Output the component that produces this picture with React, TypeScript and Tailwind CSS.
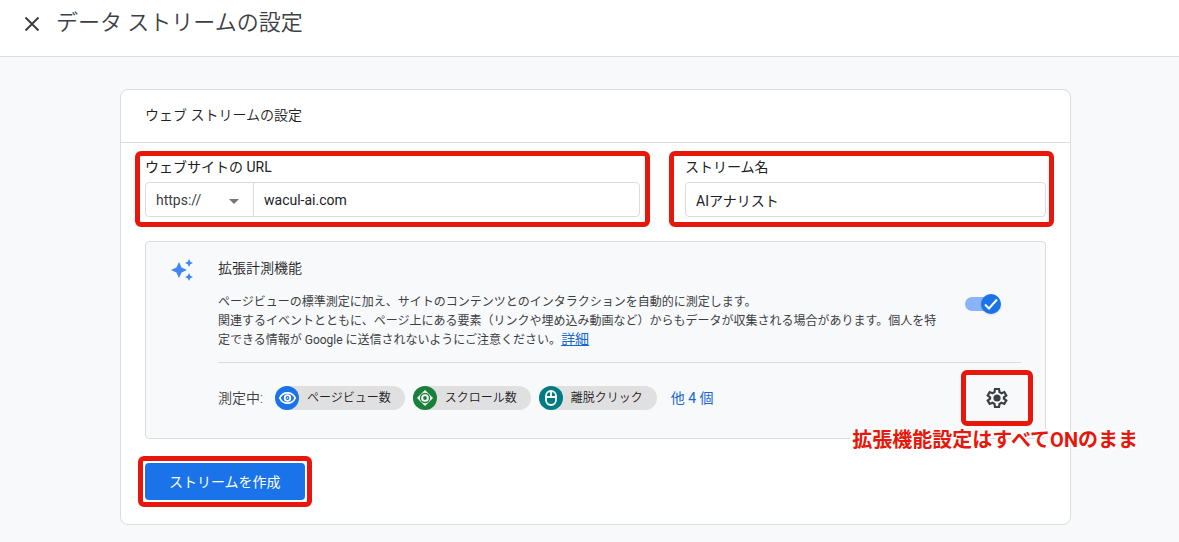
import { useState, type ReactNode } from 'react'
import clsx from 'clsx'

const STREAM_FONT = "font-['Roboto','Noto_Sans_CJK_JP',sans-serif]"

function Highlight({ className }: { className: string }) {
  return (
    <span
      aria-hidden="true"
      className={clsx('pointer-events-none absolute rounded-md border-5 border-[#e8170b]', className)}
    />
  )
}

function EyeIcon() {
  return (
    <svg viewBox="0 0 24 24" className="size-6">
      <path
        d="M4.800 12c1.400-3.200 4.200-5.200 7.700-5.200s6.300 2 7.700 5.200c-1.400 3.200-4.200 5.200-7.700 5.200S6.200 15.200 4.800 12z"
        fill="none"
        stroke="#fff"
        strokeWidth="1.800"
      />
      <circle cx="12.500" cy="12" r="2.800" fill="none" stroke="#fff" strokeWidth="1.800" />
      <circle cx="12.500" cy="12" r="0.800" fill="#fff" />
    </svg>
  )
}

function ScrollIcon() {
  return (
    <svg viewBox="0 0 24 24" className="size-6">
      <path d="M12 4l8 8-8 8-8-8z" fill="#fff" />
      <circle cx="12" cy="12" r="4.500" fill="none" stroke="#188038" strokeWidth="1.300" />
      <circle cx="12" cy="12" r="1.900" fill="#188038" />
    </svg>
  )
}

function MouseIcon() {
  return (
    <svg viewBox="0 0 24 24" className="size-6" fill="none" stroke="#fff" strokeWidth="1.800">
      <rect x="7" y="5" width="10" height="14" rx="5" />
      <path d="M7 11h10M12 5v6" />
    </svg>
  )
}

type ChipProps = {
  label: string
  color: string
  icon: ReactNode
}

const METRICS: ChipProps[] = [
  { label: 'ページビュー数', color: 'bg-[#1a73e8]', icon: <EyeIcon /> },
  { label: 'スクロール数', color: 'bg-[#188038]', icon: <ScrollIcon /> },
  { label: '離脱クリック', color: 'bg-[#007b83]', icon: <MouseIcon /> },
]

function MetricChip({ label, color, icon }: ChipProps) {
  return (
    <li className="flex h-6 items-center gap-2 rounded-full bg-[#e0e0e0] pr-3.5 text-xs text-[#202124]">
      <span className={clsx('size-6 rounded-full', color)}>{icon}</span>
      {label}
    </li>
  )
}

function MeasurementSwitch() {
  const [enabled, setEnabled] = useState(true)

  return (
    <label className="relative flex h-5 w-9 cursor-pointer items-center">
      <input
        type="checkbox"
        role="switch"
        aria-label="拡張計測機能"
        checked={enabled}
        onChange={(e) => setEnabled(e.target.checked)}
        className="peer sr-only"
      />
      <span className="h-3.5 w-8 rounded-full bg-gray-300 peer-checked:bg-[#8ab4f8]" />
      <span className="absolute left-0 flex size-5 items-center justify-center rounded-full bg-gray-500 shadow peer-checked:left-4 peer-checked:bg-[#1a73e8]">
        <svg viewBox="0 0 20 20" className="size-5" fill="none" stroke="#fff" strokeWidth="2">
          <path d="M4 10.500l4 4 8-9" />
        </svg>
      </span>
    </label>
  )
}

export default function App() {
  const [protocol, setProtocol] = useState('https://')
  const [url, setUrl] = useState('wacul-ai.com')
  const [name, setName] = useState('AIアナリスト')

  return (
    <div className={clsx('min-h-screen bg-[#f8f9fb] text-sm text-[#202124]', STREAM_FONT)}>
      {/* Header */}
      <header className="flex h-[57px] items-start gap-4 border-b border-[#dadce0] bg-white pt-2 pl-6">
        <button type="button" aria-label="閉じる" className="mt-2 size-4">
          <svg viewBox="0 0 16 16" className="size-4" fill="none" stroke="#3c4043" strokeWidth="2">
            <path d="M1.500 1.500l13 13M14.500 1.500l-13 13" />
          </svg>
        </button>
        <h1 className="text-[22px] leading-[30px] font-[350] text-[#3c4043]">データ ストリームの設定</h1>
      </header>

      <main className="pt-8 pr-[108px] pb-4 pl-[120px]">
        <section className="rounded-lg border border-[#dadce0] bg-white">
          <h2 className="border-b border-[#dadce0] px-6 pt-[15px] pb-[17px] leading-5 font-[350]">
            ウェブ ストリームの設定
          </h2>

          <form className="px-6 pt-3.5 pb-6" onSubmit={(e) => e.preventDefault()}>
            <div className="grid grid-cols-[495fr_361fr] gap-[45px]">
              {/* Site URL */}
              <div className="relative">
                <label htmlFor="site-url" className="block leading-5">
                  ウェブサイトの URL
                </label>
                <div className="mt-[5px] flex h-[35px] rounded border border-[#dadce0]">
                  <div className="relative w-[108px] border-r border-[#dadce0]">
                    <select
                      aria-label="プロトコル"
                      value={protocol}
                      onChange={(e) => setProtocol(e.target.value)}
                      className="h-full w-full appearance-none pl-2.5 text-[#3c4043] outline-none"
                    >
                      <option>https://</option>
                      <option>http://</option>
                    </select>
                    <svg viewBox="0 0 10 5" className="pointer-events-none absolute top-4 right-3.5 h-[5px] w-2.5">
                      <path d="M0 0h10L5 5z" fill="#757575" />
                    </svg>
                  </div>
                  <input
                    id="site-url"
                    value={url}
                    onChange={(e) => setUrl(e.target.value)}
                    className="min-w-0 flex-1 px-2.5 outline-none"
                  />
                </div>
                <Highlight className="-top-1.5 -right-2.5 -bottom-2.5 -left-2.5" />
              </div>

              {/* Stream name */}
              <div className="relative">
                <label htmlFor="stream-name" className="block leading-5">
                  ストリーム名
                </label>
                <input
                  id="stream-name"
                  value={name}
                  onChange={(e) => setName(e.target.value)}
                  className="mt-[5px] block h-[35px] w-full rounded border border-[#dadce0] px-2.5 outline-none"
                />
                <Highlight className="-top-1.5 -right-2 -bottom-2.5 -left-4" />
              </div>
            </div>

            {/* Enhanced measurement */}
            <div className="relative mt-6 flex rounded border border-[#dadce0] bg-[#f8f9fb] pt-4 pr-6 pb-7 pl-6">
              <svg viewBox="0 0 24 24" className="mr-6 size-6 shrink-0" fill="#4285f4">
                <path d="M9 4l2.600 5.400L17 12l-5.400 2.600L9 20l-2.600-5.400L1 12l5.400-2.600z" />
                <path d="M19 1l1.300 2.700L23 5l-2.700 1.300L19 9l-1.300-2.700L15 5l2.700-1.300zM19 15l1.300 2.700L23 19l-2.700 1.300L19 23l-1.300-2.700L15 19l2.700-1.300z" />
              </svg>
              <div className="min-w-0 flex-1">
                <h3 className="leading-5 font-[350]">拡張計測機能</h3>
                <div className="mt-[15px] flex items-start justify-between border-b border-[#dadce0] pb-3">
                  <p className="text-xs leading-[19px] text-[#3c4043]">
                    ページビューの標準測定に加え、サイトのコンテンツとのインタラクションを自動的に測定します。
                    <br />
                    関連するイベントとともに、ページ上にある要素（リンクや埋め込み動画など）からもデータが収集される場合があります。個人を特
                    <br />
                    定できる情報が Google に送信されないようにご注意ください。
                    <a href="#details" className="text-sm leading-none text-[#1967d2] underline">
                      詳細
                    </a>
                  </p>
                  <div className="mt-px mr-5">
                    <MeasurementSwitch />
                  </div>
                </div>

                <div className="mt-[23px] flex items-center font-[350]">
                  <span className="mr-3 text-[#3c4043]">測定中:</span>
                  <ul className="flex gap-2">
                    {METRICS.map((metric) => (
                      <MetricChip key={metric.label} {...metric} />
                    ))}
                  </ul>
                  <a href="#more" className="ml-3.5 font-normal text-[#1967d2]">
                    他 4 個
                  </a>
                  <div className="relative mr-3 ml-auto size-6">
                    <button type="button" aria-label="設定" className="block size-6">
                      <svg viewBox="0 0 24 24" className="size-6" fill="none" stroke="#3c4043" strokeWidth="2.200">
                        <path d="M10 3h4l.5 3 2 1.200 2.800-1.100 2 3.400-2.400 1.800v1.400l2.400 1.800-2 3.400-2.800-1.100-2 1.200-.5 3h-4l-.5-3-2-1.200-2.800 1.100-2-3.400 2.400-1.800v-1.400L2.700 9.500l2-3.400 2.800 1.100 2-1.200z" />
                        <circle cx="12" cy="12" r="3.600" fill="#3c4043" stroke="none" />
                      </svg>
                    </button>
                    <Highlight className="-inset-x-6 -inset-y-4" />
                  </div>
                </div>
              </div>
              <p className="absolute -right-[93px] -bottom-4 text-xl leading-7 font-bold whitespace-nowrap text-[#e8170b] [paint-order:stroke_fill] [-webkit-text-stroke:4px_white]">
                拡張機能設定はすべてONのまま
              </p>
            </div>

            <div className="relative mt-6 w-fit">
              <button type="submit" className="block h-[37px] rounded bg-[#1a73e8] px-6 text-white">
                ストリームを作成
              </button>
              <Highlight className="-inset-[7px]" />
            </div>
          </form>
        </section>
      </main>
    </div>
  )
}
